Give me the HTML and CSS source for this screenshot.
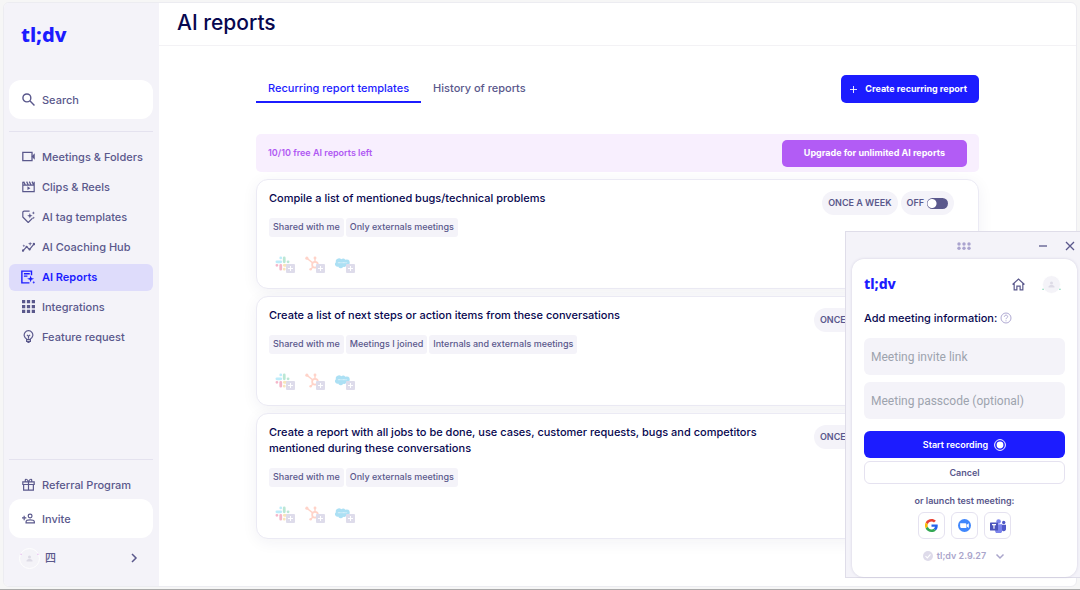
FILE: index.html
```html
<!DOCTYPE html>
<html lang="en">
<head>
<meta charset="utf-8">
<title>AI reports</title>
<link rel="stylesheet" href="styles.css">
</head>
<body>
<svg class="sprite" aria-hidden="true">
  <symbol id="slack" viewBox="0 0 24 24">
    <g stroke-width="4.4" stroke-linecap="round" fill="none">
      <path stroke="#36c5f0" d="M3 9.2h6.2M9.2 3v.1"/>
      <path stroke="#2eb67d" d="M14.8 3v6.2M21 9.2h-.1"/>
      <path stroke="#ecb22e" d="M21 14.8h-6.2M14.8 21v-.1"/>
      <path stroke="#e01e5a" d="M9.2 21v-6.2M3 14.8h.1"/>
    </g>
  </symbol>
  <symbol id="hubspot" viewBox="0 0 24 24">
    <g fill="none" stroke="#ff7a59" stroke-width="2.2">
      <circle cx="16" cy="14" r="4.6" stroke-width="2.8"/>
      <path d="M16 9V4M12.300 11L3.500 4M12.700 17.500L9.500 20.800"/>
    </g>
    <g fill="#ff7a59"><circle cx="16" cy="3.200" r="2.300"/><circle cx="3" cy="3.400" r="2.500"/><circle cx="9" cy="21.300" r="2"/></g>
  </symbol>
  <symbol id="salesforce" viewBox="0 0 26 20">
    <path fill="#00a1e0" d="M10.800 2.800a5 5 0 0 1 7.200.8 5 5 0 0 1 7.500 4.700 5.200 5.200 0 0 1-6.200 5.600 4 4 0 0 1-5.200 1.700 4.700 4.700 0 0 1-8.600-.4A4.200 4.200 0 0 1 1.700 7.800a4.800 4.800 0 0 1 4-6.600 5.200 5.200 0 0 1 5.100 1.600z"/>
    <path stroke="#fff" stroke-width="1.600" stroke-dasharray="1.600 .6" opacity=".7" d="M5 8.600h16"/>
  </symbol>
  <symbol id="person" viewBox="0 0 24 24"><circle cx="12" cy="8" r="4"/><path d="M4 20v-2c0-3 5-4.500 8-4.500s8 1.500 8 4.500v2z"/></symbol>
</svg>

<div class="app">
  <aside class="sidebar">
    <a class="logo" href="#">tl;dv</a>
    <button class="side-box search" type="button">
      <svg viewBox="0 0 24 24" class="icon"><g fill="none" stroke="currentColor" stroke-width="2.600"><circle cx="9" cy="9" r="7.300"/><path d="M14.500 14.500L23 23"/></g></svg>
      <span>Search</span>
    </button>
    <nav class="nav">
      <a href="#"><svg viewBox="0 0 24 24" class="icon"><path fill="none" stroke="currentColor" stroke-width="2.400" d="M1.500 4.500h17v15h-17z"/><path fill="currentColor" d="M18 11.500l5.500-5.500v12L18 12.500z"/></svg><span>Meetings &amp; Folders</span></a>
      <a href="#"><svg viewBox="0 0 24 24" class="icon"><path fill="none" stroke="currentColor" stroke-width="2.200" d="M1.500 3v18.500h21V3M1.500 9.500h21M3 3l3 6M8.500 3l3 6M13.500 3l3 6M18.500 3l3 6"/><path fill="currentColor" d="M10 11.500l5.500 3.500-5.500 3.500z"/></svg><span>Clips &amp; Reels</span></a>
      <a href="#"><svg viewBox="0 0 24 24" class="icon"><path fill="none" stroke="currentColor" stroke-width="2.200" stroke-linejoin="round" d="M14 2H4a2.500 2.500 0 0 0-2.500 2.500V13l10 10 8-8"/><path fill="currentColor" d="M14.500 5.500l1.300 3.700 3.700 1.300-3.700 1.300-1.300 3.700-1.300-3.700-3.700-1.300 3.700-1.300zM21 2.500l.8 2.200L24 5.500l-2.200.8L21 8.500l-.8-2.200L18 5.500l2.200-.8zM21.500 12l.7 1.800 1.800.7-1.800.7-.7 1.800-.7-1.800-1.800-.7 1.800-.7z"/></svg><span>AI tag templates</span></a>
      <a href="#"><svg viewBox="0 0 24 24" class="icon"><path fill="none" stroke="currentColor" stroke-width="2.200" d="M2 19.500L8.500 12.500l5.500 5 8-10"/><g fill="currentColor"><circle cx="2" cy="19.500" r="2.200"/><circle cx="8.500" cy="12.500" r="2"/><circle cx="14" cy="17.500" r="2"/><circle cx="22" cy="7.500" r="2.200"/><path d="M15 3l1 3 3 1-3 1-1 3-1-3-3-1 3-1zM3.500 8l.7 2 2 .7-2 .8-.7 2-.8-2-2-.8 2-.7z"/></g></svg><span>AI Coaching Hub</span></a>
      <a href="#" class="active" aria-current="page"><svg viewBox="0 0 24 24" class="icon wide-icon"><path fill="none" stroke="currentColor" stroke-width="2.400" d="M18 9V2H1.500v20h13M5 6.500h10M5 10.500h6"/><path fill="currentColor" d="M16.500 9.500l1.500 4.200 4.500 1.500-4.500 1.500-1.500 4.500-1.500-4.500-4.500-1.500 4.500-1.500zM22 18.500l.8 1.900 1.200.8-1.200.8-.8 2-.8-2-1.900-.8 1.900-.8z"/></svg><span>AI Reports</span></a>
      <a href="#"><svg viewBox="0 0 24 24" class="icon"><path fill="currentColor" d="M0 0h6v6H0zM9 0h6v6H9zM18 0h6v6h-6zM0 9h6v6H0zM9 9h6v6H9zM18 9h6v6h-6zM0 18h6v6H0zM9 18h6v6H9zM18 18h6v6h-6z"/></svg><span>Integrations</span></a>
      <a href="#"><svg viewBox="0 0 24 24" class="icon"><g fill="none" stroke="currentColor" stroke-width="2.200"><path d="M8.500 16.500A8 8 0 1 1 15.500 16.500V21h-7zM8.500 17.500h7M9 9l3 2.500L15 9M12 11.500V16M10 23h4"/></g></svg><span>Feature request</span></a>
    </nav>
    <div class="side-bottom">
      <a href="#" class="side-link"><svg viewBox="0 0 24 24" class="icon"><path fill="none" stroke="currentColor" stroke-width="2.200" d="M1.500 7h21v5h-21zM3 12v10.500h18V12M12 7v15M12 7C9 0 4.500 1.500 6.500 7M12 7c3-7 7.500-5.500 5.500 0"/></svg><span>Referral Program</span></a>
      <button class="side-box" type="button"><svg viewBox="0 0 24 24" class="icon"><g fill="none" stroke="currentColor" stroke-width="2.200"><circle cx="15" cy="7.500" r="3.500"/><path d="M7.500 20v-2c0-2 4-3.500 7.500-3.500s7.800 1.500 7.800 3.500v2zM0 11h8M4 7v8"/></g></svg><span>Invite</span></button>
      <button class="user" type="button"><span class="avatar"><svg viewBox="0 0 24 24"><use href="#person"/><path fill="#e3a5ee" d="M-12-1h3v3h-3zM33-1h3v3h-3z"/></svg></span><span lang="zh">四</span><svg viewBox="0 0 12 12" class="chevron"><path d="M4 2l4 4-4 4"/></svg></button>
    </div>
  </aside>

  <main class="main">
    <header class="head"><h1>AI reports</h1></header>
    <div class="content">
      <div class="toolbar">
        <div class="tabs" role="tablist">
          <button type="button" role="tab" aria-selected="true" class="tab selected">Recurring report templates</button>
          <button type="button" role="tab" aria-selected="false" class="tab">History of reports</button>
        </div>
        <button type="button" class="create"><svg viewBox="0 0 8 8"><path d="M4 0v8M0 4h8"/></svg>Create recurring report</button>
      </div>
      <section class="banner"><span>10/10 free AI reports left</span><button type="button">Upgrade for unlimited AI reports</button></section>

      <article class="card">
        <div class="card-body">
          <h2>Compile a list of mentioned bugs/technical problems</h2>
          <div class="tags"><span>Shared with me</span><span>Only externals meetings</span></div>
          <div class="apps">
            <button type="button" aria-label="Add Slack"><svg viewBox="0 0 24 24"><use href="#slack"/></svg><i></i></button>
            <button type="button" aria-label="Add HubSpot"><svg viewBox="0 0 24 24"><use href="#hubspot"/></svg><i></i></button>
            <button type="button" aria-label="Add Salesforce"><svg viewBox="0 0 24 24"><use href="#salesforce"/></svg><i></i></button>
          </div>
        </div>
        <div class="card-side"><span class="pill">ONCE A WEEK</span><label class="pill">OFF<input type="checkbox" class="switch"></label></div>
      </article>

      <article class="card">
        <div class="card-body">
          <h2>Create a list of next steps or action items from these conversations</h2>
          <div class="tags"><span>Shared with me</span><span>Meetings I joined</span><span>Internals and externals meetings</span></div>
          <div class="apps">
            <button type="button" aria-label="Add Slack"><svg viewBox="0 0 24 24"><use href="#slack"/></svg><i></i></button>
            <button type="button" aria-label="Add HubSpot"><svg viewBox="0 0 24 24"><use href="#hubspot"/></svg><i></i></button>
            <button type="button" aria-label="Add Salesforce"><svg viewBox="0 0 24 24"><use href="#salesforce"/></svg><i></i></button>
          </div>
        </div>
        <div class="card-side"><span class="pill">ONCE A MONTH</span><label class="pill">OFF<input type="checkbox" class="switch"></label></div>
      </article>

      <article class="card">
        <div class="card-body">
          <h2>Create a report with all jobs to be done, use cases, customer requests, bugs and competitors mentioned during these conversations</h2>
          <div class="tags"><span>Shared with me</span><span>Only externals meetings</span></div>
          <div class="apps">
            <button type="button" aria-label="Add Slack"><svg viewBox="0 0 24 24"><use href="#slack"/></svg><i></i></button>
            <button type="button" aria-label="Add HubSpot"><svg viewBox="0 0 24 24"><use href="#hubspot"/></svg><i></i></button>
            <button type="button" aria-label="Add Salesforce"><svg viewBox="0 0 24 24"><use href="#salesforce"/></svg><i></i></button>
          </div>
        </div>
        <div class="card-side"><span class="pill">ONCE A MONTH</span><label class="pill">OFF<input type="checkbox" class="switch"></label></div>
      </article>
    </div>
  </main>
</div>

<section class="recorder" aria-label="Recorder">
  <div class="bar">
    <svg class="grip" viewBox="0 0 14 8"><g fill="#aaa4cf"><circle cx="2" cy="2" r="1.700"/><circle cx="7" cy="2" r="1.700"/><circle cx="12" cy="2" r="1.700"/><circle cx="2" cy="6.300" r="1.700"/><circle cx="7" cy="6.300" r="1.700"/><circle cx="12" cy="6.300" r="1.700"/></g></svg>
    <div class="win">
      <button type="button" aria-label="Minimise"><svg viewBox="0 0 10 10"><path d="M1 5h8"/></svg></button>
      <button type="button" aria-label="Close"><svg viewBox="0 0 10 10"><path d="M1 1l8 8M9 1L1 9"/></svg></button>
    </div>
  </div>
  <form class="panel">
    <div class="panel-head">
      <span class="logo small">tl;dv</span>
      <button type="button" class="home" aria-label="Home"><svg viewBox="0 0 24 24"><path fill="none" stroke="currentColor" stroke-width="2.200" d="M1 12L12 2l11 10M4 10v12h5v-7h6v7h5V10"/></svg></button>
      <span class="avatar plain"><svg viewBox="0 0 24 24"><use href="#person"/><path fill="#3fc08e" d="M-12 23h3v3h-3zM33 23h3v3h-3z"/></svg></span>
    </div>
    <p class="lead">Add meeting information: <svg viewBox="0 0 12 12"><g fill="none" stroke="#b0aad3"><circle cx="6" cy="6" r="5"/><path d="M4.300 4.800c0-2.200 3.400-2.200 3.400-.1C7.700 5.900 6 5.800 6 7.200M6 8.300v1"/></g></svg></p>
    <input class="field" type="text" aria-label="Meeting invite link" placeholder="Meeting invite link">
    <input class="field" type="text" aria-label="Meeting passcode" placeholder="Meeting passcode (optional)">
    <button type="button" class="start">Start recording<svg viewBox="0 0 12 12"><circle cx="6" cy="6" r="5.400" fill="none" stroke="#fff"/><circle cx="6" cy="6" r="3.400" fill="#fff"/></svg></button>
    <button type="button" class="cancel">Cancel</button>
    <p class="or">or launch test meeting:</p>
    <div class="launch">
      <button type="button" aria-label="Google Meet"><svg viewBox="0 0 48 48"><path fill="#ea4335" d="M24 9.500c3.500 0 6.700 1.200 9.200 3.600l6.900-6.900C35.900 2.400 30.500 0 24 0 14.600 0 6.500 5.400 2.600 13.200l8 6.200C12.400 13.700 17.700 9.500 24 9.500z"/><path fill="#2563eb" d="M47 24.600c0-1.600-.2-3.100-.4-4.600H24v9h12.900c-.6 3-2.200 5.500-4.700 7.200l7.700 6C44.400 38 47 31.800 47 24.600z"/><path fill="#fbbc05" d="M10.500 28.600a14.500 14.500 0 0 1 0-9.200l-8-6.200a24 24 0 0 0 0 21.600z"/><path fill="#34a853" d="M24 48c6.500 0 11.900-2.100 15.900-5.800l-7.700-6c-2.200 1.500-4.900 2.300-8.200 2.300-6.300 0-11.600-4.200-13.500-9.900l-8 6.200C6.500 42.600 14.600 48 24 48z"/></svg></button>
      <button type="button" aria-label="Zoom"><svg viewBox="0 0 24 24"><circle cx="12" cy="12" r="12" fill="#4087fc"/><path fill="#fff" d="M4 8h9.500a2 2 0 0 1 2 2v6.500H6a2 2 0 0 1-2-2zM16.300 10.800L20 8v8.500l-3.700-2.800z"/></svg></button>
      <button type="button" aria-label="Teams"><svg class="wide" viewBox="0 0 28 24"><circle cx="24" cy="6" r="3" fill="#5059c9"/><path fill="#5059c9" d="M20 10h8v8a4.500 4.500 0 0 1-8 1z"/><circle cx="15" cy="4" r="4" fill="#7b83eb"/><path fill="#7b83eb" d="M9 9h12v9a6 6 0 0 1-12 3z"/><rect y="6" width="14" height="14" rx="1" fill="#4b53bc"/><path fill="none" stroke="#fff" stroke-width="2" d="M3.500 9.500h7M7 9.500V17"/></svg></button>
    </div>
    <button type="button" class="version"><svg viewBox="0 0 12 12"><circle cx="6" cy="6" r="6" fill="#dedbea"/><path fill="none" stroke="#fff" stroke-width="1.400" d="M3 6.200l2.200 2.100L9 4"/></svg>tl;dv 2.9.27<svg viewBox="0 0 12 12" class="chevron"><path d="M2.500 4.500L6 8l3.500-3.500"/></svg></button>
  </form>
</section>
</body>
</html>
```

FILE: styles.css
```css
* { box-sizing: border-box; }

:root {
  --blue: #1c1cff;
  --navy: #07074f;
  --slate: #5a588c;
  --mist: #f4f3f9;
  --line: #e4e2ef;
}

body {
  margin: 0;
  min-height: 100vh;
  padding: 2px 3px 2px;
  display: flex;
  background: #f6f6f6;
  border-bottom: 1px solid #aaa;
  color: var(--slate);
  font: 500 11px/16px Inter, "Noto Sans CJK SC", sans-serif;
}

button, input { font: inherit; color: inherit; }
button { margin: 0; padding: 0; border: 0; background: none; }
a { color: inherit; text-decoration: none; }
h1, h2, p { margin: 0; }
svg { display: block; flex: none; }
.sprite { position: absolute; width: 0; height: 0; }

.app {
  flex: 1;
  display: flex;
  overflow: hidden;
  border: 1px solid #ececf1;
  border-radius: 6px;
  background: #fff;
}

/* Sidebar */
.sidebar {
  width: 155px;
  padding: 20px 6px 12px 5px;
  display: flex;
  flex-direction: column;
  background: var(--mist);
}
.logo {
  padding-left: 12px;
  color: var(--blue);
  font: 800 20px/24px "Noto Sans", sans-serif;
}
.icon { width: 13px; height: 13px; }
.side-box {
  width: 100%;
  height: 39px;
  padding: 0 13px;
  display: flex;
  align-items: center;
  gap: 7px;
  border-radius: 12px;
  background: #fff;
}
.search { margin-top: 33px; }
.nav {
  margin-top: 12px;
  padding-top: 12px;
  display: grid;
  grid-template-columns: minmax(0, 1fr);
  gap: 3px;
  border-top: 1px solid var(--line);
}
.nav a, .side-link {
  height: 27px;
  padding: 0 0 2px 13px;
  display: flex;
  align-items: center;
  gap: 7px;
  border-radius: 6px;
  white-space: nowrap;
}
.nav .active { padding-left: 12px; background: #dedcfb; color: var(--blue); font-weight: 600; }
.wide-icon { width: 14px; height: 14px; }
.side-bottom {
  margin-top: auto;
  padding-top: 12px;
  border-top: 1px solid var(--line);
}
.user {
  width: 100%;
  height: 36px;
  padding: 4px 13px 0 10px;
  display: flex;
  align-items: center;
  gap: 5px;
}
.avatar {
  width: 21px;
  height: 21px;
  display: grid;
  place-items: center;
  border: 1px solid #fff;
  border-radius: 50%;
  background: #f4f3f8;
}
.avatar svg { width: 9px; height: 9px; overflow: visible; fill: #dddbe6; }
.chevron { width: 12px; height: 12px; fill: none; stroke: currentColor; stroke-width: 1.500; }
.user .chevron { margin-left: auto; }

/* Main column */
.main { flex: 1; min-width: 0; }
.head { height: 43px; padding: 6px 18px; border-bottom: 1px solid #f3f2f5; }
h1 { color: var(--navy); font-size: 21px; line-height: 28px; font-weight: 500; }
.content {
  padding: 29px 97px 0;
  display: grid;
  gap: 7px;
}
.toolbar { display: flex; justify-content: space-between; align-items: flex-start; }
.tabs { display: flex; }
.tab { height: 28px; padding: 0 12px 2px; white-space: nowrap; }
.tab.selected { padding-bottom: 0; border-bottom: 2px solid var(--blue); color: var(--blue); }
.create {
  height: 28px;
  padding: 0 12px 0 9px;
  display: flex;
  align-items: center;
  gap: 8px;
  border-radius: 5px;
  background: var(--blue);
  color: #fff;
  font-size: 9px;
  font-weight: 700;
}
.create svg { width: 7px; height: 7px; fill: none; stroke: #fff; }
.banner {
  height: 38px;
  margin-top: 24px;
  padding: 0 12px;
  display: flex;
  align-items: center;
  justify-content: space-between;
  border-radius: 5px;
  background: #f8effe;
  color: #b059f3;
  font-size: 9px;
  font-weight: 600;
}
.banner button {
  height: 27px;
  padding: 0 22px;
  border-radius: 5px;
  background: #b25cf5;
  color: #fff;
  font-weight: 700;
}

.card {
  display: flex;
  justify-content: space-between;
  padding: 10px 24px 14px 12px;
  border: 1px solid #ebeaf4;
  border-radius: 12px;
  background: #fff;
  box-shadow: 0 3px 16px rgba(40, 35, 90, .06);
}
.card-body { max-width: 500px; }
.card-side { padding-top: 1px; display: flex; align-items: flex-start; gap: 3px; }
h2 { color: var(--navy); font-size: 11px; line-height: 16px; font-weight: 500; }
.tags { margin-top: 12px; display: flex; gap: 2px; font-size: 9px; }
.tags span { height: 19px; padding: 0 4px; border-radius: 3px; background: var(--mist); line-height: 18px; white-space: nowrap; }
.apps { margin-top: 15px; padding-left: 6px; display: flex; gap: 10px; }
.apps button { position: relative; width: 20px; height: 22px; }
.apps svg { width: 15px; height: 15px; opacity: .32; }
.apps i {
  position: absolute;
  right: 0;
  bottom: 1px;
  width: 9px;
  height: 9px;
  border-radius: 1px;
  background: linear-gradient(#fff, #fff) center / 5px 1px no-repeat, linear-gradient(#fff, #fff) center / 1px 5px no-repeat, #dedceb;
}
.pill {
  height: 24px;
  padding: 0 6px;
  display: flex;
  align-items: center;
  gap: 3px;
  border-radius: 12px;
  background: var(--mist);
  font-size: 9px;
  font-weight: 600;
  white-space: nowrap;
}
.switch {
  appearance: none;
  width: 21px;
  height: 11px;
  margin: 0;
  border-radius: 6px;
  background: radial-gradient(circle at 5px 50%, #fff 4px, transparent 5px) var(--slate);
}

/* Floating recorder window */
.recorder {
  position: absolute;
  top: 231px;
  right: 0;
  width: 235px;
  padding: 0 3px 0 6px;
  border: 1px solid #dfdde9;
  border-right: 0;
  background: var(--mist);
}
.bar { height: 27px; display: flex; align-items: center; justify-content: flex-end; gap: 67px; }
.grip { width: 14px; height: 8px; }
.win { display: flex; gap: 17px; padding-right: 2px; }
.win svg { width: 10px; height: 10px; fill: none; stroke: currentColor; stroke-width: 1.300; }
.panel {
  padding: 15px 12px 13px;
  display: flex;
  flex-direction: column;
  border-radius: 12px;
  background: #fff;
  box-shadow: 0 0 3px rgba(70, 60, 120, .18);
}
.panel-head { height: 20px; display: flex; align-items: center; }
.logo.small { margin-right: auto; padding: 0; font-size: 14px; line-height: 20px; }
.home svg { width: 13px; height: 13px; }
.plain { width: 19px; height: 19px; margin: 0 4px 0 17px; }
.lead { margin-top: 16px; display: flex; align-items: center; gap: 3px; color: var(--navy); }
.lead svg { width: 12px; height: 12px; }
.field {
  width: 100%;
  height: 37px;
  margin-top: 12px;
  padding: 0 7px;
  border: 0;
  border-radius: 6px;
  background: var(--mist);
  font: 400 12px/16px Roboto, sans-serif;
}
.field + .field { margin-top: 7px; }
.field::placeholder { color: #9da3ae; opacity: 1; }
.start, .cancel { border-radius: 6px; font-size: 9px; font-weight: 600; }
.start {
  height: 27px;
  margin-top: 12px;
  display: flex;
  align-items: center;
  justify-content: center;
  gap: 6px;
  background: var(--blue);
  color: #fff;
}
.start svg { width: 12px; height: 12px; }
.cancel { height: 23px; margin-top: 3px; border: 1px solid #e5e2f0; }
.or { margin-top: 9px; text-align: center; font-size: 9px; font-weight: 600; }
.launch { margin-top: 3px; display: flex; justify-content: center; gap: 6px; }
.launch button { width: 27px; height: 27px; display: grid; place-items: center; border: 1px solid #e5e2f0; border-radius: 6px; }
.launch svg { width: 13px; height: 13px; }
.launch .wide { width: 16px; height: 14px; }
.version { margin-top: 9px; display: flex; align-items: center; justify-content: center; gap: 4px; color: #aaa5cb; font-size: 9px; font-weight: 600; }
.version svg:first-child { width: 10px; height: 10px; }
.version .chevron { margin-left: 4px; }
```
